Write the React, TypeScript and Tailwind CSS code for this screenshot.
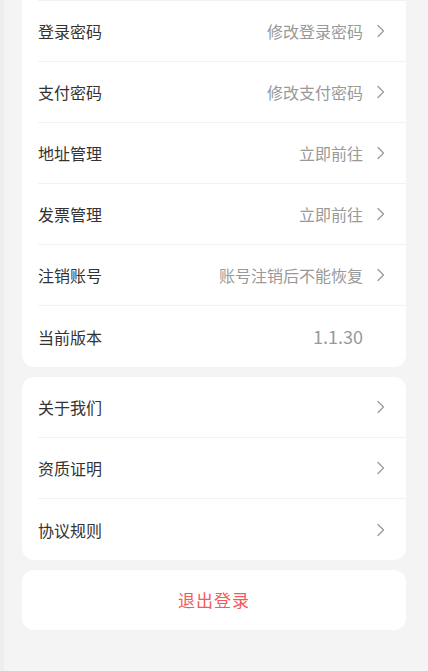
const Chevron = () => (
  <svg width="10" height="16" viewBox="0 0 10 16" fill="none" className="ml-[13px]">
    <path d="M2 2.5 L7.5 8 L2 13.5" stroke="#9a9a9a" strokeWidth="1.3" strokeLinecap="round" strokeLinejoin="round" />
  </svg>
);

interface rowProp {
  label: string;
  value?: string;
  arrow?: boolean;
  last?: boolean;
  big?: boolean;
}

const Row = ({ label, value, arrow = true, last, big }: rowProp) => {
  return (
    <div className={`h-[61px] flex items-center pr-[20px] ${last ? "" : "border-b border-[#f2f2f2]"}`}>
      <span className="text-[16px] text-[#333333] flex-1">{label}</span>
      {value && <span className={`${big ? "text-[18px]" : "text-[16px]"} text-[#999999]`}>{value}</span>}
      {arrow ? <Chevron /> : <span className="w-[23px]" />}
    </div>
  );
};

const App = () => {
  return (
    <div
      className="w-[428px] h-[671px] bg-[#f4f4f4] border-l-4 border-[#eeeeee] overflow-hidden"
      style={{ fontFamily: '"Noto Sans CJK SC", "Noto Sans", sans-serif' }}
    >
      <div className="pl-[18px] pr-[22px] flex flex-col gap-[10px]">
        {/* ACCOUNT SECTION */}
        <div className="bg-white rounded-b-[12px] pl-[16px]">
          <div className="border-t border-[#f2f2f2]">
            <Row label="登录密码" value="修改登录密码" />
            <Row label="支付密码" value="修改支付密码" />
            <Row label="地址管理" value="立即前往" />
            <Row label="发票管理" value="立即前往" />
            <Row label="注销账号" value="账号注销后不能恢复" />
            <Row label="当前版本" value="1.1.30" arrow={false} last big />
          </div>
        </div>

        {/* ABOUT SECTION */}
        <div className="bg-white rounded-[12px] pl-[16px]">
          <Row label="关于我们" />
          <Row label="资质证明" />
          <Row label="协议规则" last />
        </div>

        {/* LOGOUT */}
        <button className="h-[60px] bg-white rounded-[12px] text-[17px] text-[#f55a5a] tracking-[1px]">
          退出登录
        </button>
      </div>
    </div>
  );
};

export default App;
